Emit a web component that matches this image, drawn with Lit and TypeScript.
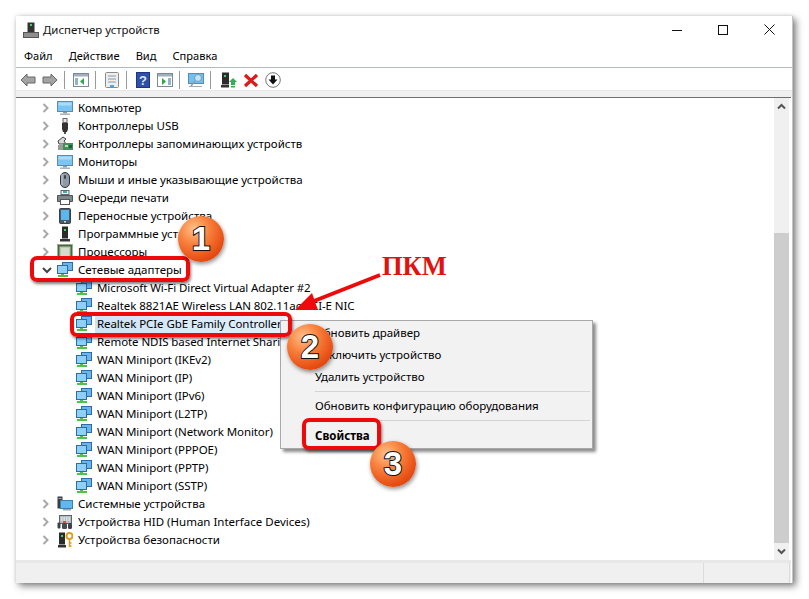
import { LitElement, html, css, svg } from "lit";
import { customElement } from "lit/decorators.js";

const ICONS: Record<string, unknown> = {
  monitor: svg`<rect x="0.5" y="1.5" width="15" height="10" fill="#7cc4f2" stroke="#5a8cb0"/><rect x="1.5" y="2.5" width="13" height="3" fill="#a9dcf8"/><rect x="6" y="12" width="4" height="1.5" fill="#8a9aa6"/><rect x="3" y="13.5" width="10" height="1.5" fill="#a8b4bc"/>`,
  usb: svg`<rect x="6" y="0.5" width="4" height="4" fill="#e8e8e8" stroke="#666"/><path d="M5 5h6v6l-1 3H6l-1-3z" fill="#333"/><rect x="7" y="14" width="2" height="2" fill="#555"/>`,
  storage: svg`<path d="M1 5l5-4 3 2-2 2 2 3H2z" fill="#d8d8d8" stroke="#444"/><rect x="1" y="9" width="8" height="5" fill="#9a9a9a"/><rect x="6" y="7" width="10" height="7" fill="#3f8f5f"/><rect x="8" y="9" width="3" height="2" fill="#c8d8a0"/><rect x="12" y="9" width="3" height="3" fill="#1d5c3a"/>`,
  mouse: svg`<rect x="3.5" y="0.5" width="9" height="15" rx="4.5" fill="#8f9aa6" stroke="#2e3338"/><rect x="7" y="3" width="2" height="4" rx="1" fill="#3c444c"/><path d="M5 2v11" stroke="#c6ced6"/>`,
  printer: svg`<rect x="4" y="0.5" width="8" height="4" fill="#eef4f6" stroke="#5c6b70"/><rect x="6" y="1" width="4" height="2" fill="#3db1a0"/><path d="M0.5 5.5h15v6h-3v-2h-9v2h-3z" fill="#7d878c" stroke="#4c5458"/><rect x="3.5" y="9.5" width="9" height="5" fill="#fff" stroke="#555"/>`,
  portable: svg`<rect x="2.5" y="0.5" width="11" height="15" rx="1" fill="#4b5a66" stroke="#36424c"/><rect x="4" y="2" width="8" height="10" fill="#5db7ef"/><rect x="7" y="13" width="2" height="1.5" fill="#cfd8df"/>`,
  software: svg`<rect x="5" y="0.5" width="6" height="12" fill="#2b2b2b"/><rect x="7" y="3" width="2" height="2" fill="#45d060"/><rect x="3" y="13" width="10" height="2.5" fill="#333"/>`,
  cpu: svg`<rect x="1.5" y="1.5" width="13" height="13" fill="#bcc9ab" stroke="#3f6b3f" stroke-width="2"/><rect x="4" y="4" width="8" height="8" fill="#d8d8cc"/><path d="M1 0v16M4 0v16M7 0v16M10 0v16M13 0v16M0 1h16" stroke="#8a7a3a" stroke-width=".6" stroke-dasharray="1 14"/>`,
  net: svg`<rect x="5.5" y="0.5" width="10" height="8" fill="#6cb5ea" stroke="#2c6ca8"/><rect x="0.5" y="3.5" width="10" height="8" fill="#8ed0f6" stroke="#2c6ca8"/><path d="M4 12h3v1h4v2H1v-2h3z" fill="#52c04c"/>`,
  system: svg`<rect x="0.5" y="0.5" width="5" height="12" fill="#3c3c3c"/><rect x="1.5" y="2" width="3" height="1" fill="#9ac"/><rect x="3.5" y="4.5" width="12" height="8" fill="#60b8ee" stroke="#3a80b0"/><rect x="6" y="13" width="8" height="1.5" fill="#9aa8b0"/>`,
  hid: svg`<rect x="2.5" y="1.5" width="12" height="8" fill="#b4bcc4" stroke="#5c646c"/><path d="M4 4h9M4 6h9" stroke="#fff" stroke-dasharray="1.5 1"/><rect x="0.5" y="8.5" width="3" height="6" rx="1" fill="#3c4248"/><rect x="5" y="9" width="5" height="6" rx="1.5" fill="#444b52"/><rect x="11" y="9" width="4" height="6" rx="1.5" fill="#3c4248"/><rect x="6" y="7" width="3" height="2" fill="#e05030"/>`,
  security: svg`<rect x="2" y="0.5" width="6" height="12" fill="#2b2b2b"/><rect x="4" y="3" width="2" height="2" fill="#45d060"/><rect x="1" y="13" width="8" height="2.5" fill="#333"/><circle cx="12.5" cy="4" r="3" fill="none" stroke="#d9a020" stroke-width="2"/><path d="M12.5 7v8M12.5 11h2M12.5 14h2" stroke="#d9a020" stroke-width="1.6"/>`,
};

const TOP_A: [string, string][] = [
  ["monitor", "Компьютер"],
  ["usb", "Контроллеры USB"],
  ["storage", "Контроллеры запоминающих устройств"],
  ["monitor", "Мониторы"],
  ["mouse", "Мыши и иные указывающие устройства"],
  ["printer", "Очереди печати"],
  ["portable", "Переносные устройства"],
  ["software", "Программные устройства"],
  ["cpu", "Процессоры"],
];
const CHILDREN = [
  "Microsoft Wi-Fi Direct Virtual Adapter #2",
  "Realtek 8821AE Wireless LAN 802.11ac PCI-E NIC",
  "Realtek PCIe GbE Family Controller",
  "Remote NDIS based Internet Sharing Device",
  "WAN Miniport (IKEv2)",
  "WAN Miniport (IP)",
  "WAN Miniport (IPv6)",
  "WAN Miniport (L2TP)",
  "WAN Miniport (Network Monitor)",
  "WAN Miniport (PPPOE)",
  "WAN Miniport (PPTP)",
  "WAN Miniport (SSTP)",
];
const TOP_B: [string, string][] = [
  ["system", "Системные устройства"],
  ["hid", "Устройства HID (Human Interface Devices)"],
  ["security", "Устройства безопасности"],
];

const winPanel = (inner: unknown) => svg`<rect x="0.5" y="1.5" width="15" height="13" fill="#fff" stroke="#7a8a96"/><rect x="1" y="2" width="14" height="2.5" fill="#9fb0bc"/>${inner}`;

@customElement("app-root")
export class AppRoot extends LitElement {
  static styles = css`
    :host { display: block; width: 809px; height: 599px; background: #fff; overflow: hidden; position: relative;
      font-family: "Noto Sans", "Open Sans", sans-serif; font-size: 11.5px; color: #000; }
    .window { margin: 16px 0 0 16px; width: 777px; height: 567px; background: #fff; display: flex; flex-direction: column;
      box-shadow: 3px 3px 7px rgba(0,0,0,.5), 0 0 3px rgba(0,0,0,.12); box-sizing: border-box; border-right: 1px solid #c4c4c4; }
    .title { height: 32px; display: flex; align-items: center; padding: 0 0 5px 7px; flex: none; box-sizing: border-box; }
    .title .t { font-size: 11.4px; margin-left: 4px; flex: 1; color: #111; }
    .ctrl { width: 46px; height: 27px; display: flex; align-items: center; justify-content: center; }
    .menu { height: 20px; display: flex; align-items: center; flex: none; border-bottom: 1px solid #b4b8c4; padding: 0 0 4px 8px; gap: 16px; box-sizing: border-box; font-size: 11.1px; }
    .toolbar { height: 22px; display: flex; align-items: center; flex: none; padding: 2px 0 0 4px; gap: 6px; box-sizing: border-box; }
    .tb { width: 16px; height: 16px; display: block; flex: none; }
    .tb.m { margin-left: 2px; }
    .sep { width: 1px; height: 18px; background: #9a9a9a; margin-right: 2px; flex: none; }
    .band { height: 7px; background: #f0f0f0; border-top: 1px solid #e6e6e6; flex: none; box-sizing: border-box; }
    .content { flex: 1; display: flex; border-top: 1px solid #6e6e6e; margin-right: 1px; min-height: 0; }
    .tree { flex: 1; padding-top: 1px; overflow: hidden; }
    .row { height: 18px; display: flex; align-items: center; white-space: nowrap; }
    .row.child { padding-left: 60px; }
    .row.child .label { letter-spacing: -.08px; }
    .row.top { padding-left: 22px; }
    .chev { width: 19px; height: 18px; flex: none; display: block; }
    .ico { width: 16px; height: 16px; flex: none; display: block; margin-right: 5px; }
    .label { height: 18px; line-height: 17px; }
    .row.sel .label { background: linear-gradient(90deg, #cfe3f5, #e4f0fb); padding-right: 3px; margin-left: -2px; padding-left: 2px; }
    .scroll { width: 15px; background: #f0f0f0; margin-right: 2px; flex: none; display: flex; flex-direction: column; }
    .sb-btn { height: 17px; display: flex; align-items: center; justify-content: center; flex: none; }
    .sb-space { height: 118px; flex: none; }
    .sb-thumb { flex: 1; background: #cdcdcd; }
    .status { height: 23px; flex: none; background: #f0f0f0; border-top: 3px solid #e8e8e8; box-sizing: border-box; margin-right: 1px; display: flex; justify-content: flex-end; }
    .cell { width: 85px; border-left: 1px solid #dcdcdc; border-right: 1px solid #dcdcdc; margin-right: 1px; }
    .ctx { position: absolute; left: 280px; top: 320px; width: 313px; height: 129px; box-sizing: border-box; background: #f2f2f2; border: 1px solid #a8a8a8;
      box-shadow: 3px 3px 3px rgba(0,0,0,.45); padding: 1px 2px 0 34px; }
    .item { height: 22px; line-height: 21px; white-space: nowrap; }
    .item.b { font-weight: 700; line-height: 23px; }
    .hr { height: 1px; background: #d4d4d4; margin: 3px 0; }
    .box { position: absolute; border: 4px solid #ee0a0a; border-radius: 7px; box-sizing: border-box; box-shadow: 1px 2px 3px rgba(0,0,0,.5); }
    .b1 { left: 30px; top: 256px; width: 160px; height: 26px; }
    .b2 { left: 70px; top: 312px; width: 222px; height: 25px; }
    .b3 { left: 302px; top: 418px; width: 79px; height: 32px; }
    .badge { position: absolute; width: 46px; height: 46px; border-radius: 50%; display: flex; align-items: center; justify-content: center;
      background: radial-gradient(circle at 35% 28%, #ffc08a 0%, #f8803c 35%, #e84e14 70%, #c83406 100%); box-shadow: 1px 2px 4px rgba(0,0,0,.45);
      font-family: "Liberation Sans", sans-serif; font-weight: 700; font-size: 33px; color: #fff; -webkit-text-stroke: 2px #111; paint-order: stroke fill; }
    .n1 { left: 178px; top: 216px; }
    .n2 { left: 287px; top: 324px; }
    .n3 { left: 370px; top: 441px; }
    .pkm { position: absolute; left: 382px; top: 250px; color: #e01212; font-family: "Liberation Serif", serif; font-weight: 700; font-size: 26.5px; line-height: 32px; white-space: nowrap; }
    .arrow { position: absolute; left: 290px; top: 268px; width: 96px; height: 48px; overflow: visible; }
  `;

  chev(open: boolean) {
    return html`<svg class="chev" viewBox="0 0 19 18">${open
      ? svg`<path d="M5 7l4 4 4-4" fill="none" stroke="#444" stroke-width="2"/>`
      : svg`<path d="M5.5 5l4 4-4 4" fill="none" stroke="#a8a8a8" stroke-width="2"/>`}</svg>`;
  }
  ico(k: string) {
    return html`<svg class="ico" viewBox="0 0 16 16">${ICONS[k]}</svg>`;
  }
  top(k: string, t: string, open = false) {
    return html`<div class="row top">${this.chev(open)}${this.ico(k)}<span class="label">${t}</span></div>`;
  }
  toolbar() {
    return html`<div class="toolbar">
      <svg class="tb" viewBox="0 0 16 16"><path d="M1 8l6-6v3h8v6H7v3z" fill="#a4a4a4" stroke="#666"/></svg>
      <svg class="tb" viewBox="0 0 16 16"><path d="M15 8L9 2v3H1v6h8v3z" fill="#a4a4a4" stroke="#666"/></svg>
      <span class="sep"></span>
      <svg class="tb" viewBox="0 0 16 16">${winPanel(svg`<rect x="2" y="6" width="3" height="7" fill="#8fb4d0"/><path d="M11 6v7l-4-3.500z" fill="#2fa84a"/>`)}</svg>
      <span class="sep"></span>
      <svg class="tb" viewBox="0 0 16 16"><rect x="1.500" y="0.500" width="13" height="15" rx="1" fill="#eee" stroke="#8a8a8a"/><path d="M4 4h8M4 7h8M4 10h8" stroke="#8a98a4"/><rect x="6" y="13" width="4" height="2" fill="#4ca8e8"/></svg>
      <span class="sep"></span>
      <svg class="tb" viewBox="0 0 16 16"><rect x="1.500" y="0.500" width="13" height="15" fill="#2d50a8" stroke="#1e3580"/><text x="8" y="13" text-anchor="middle" font-size="13" font-weight="700" font-family="Liberation Sans" fill="#dce6ff">?</text></svg>
      <svg class="tb" viewBox="0 0 16 16">${winPanel(svg`<rect x="11" y="6" width="3" height="7" fill="#8fb4d0"/><path d="M5 6v7l4-3.500z" fill="#2fa84a"/>`)}</svg>
      <span class="sep"></span>
      <svg class="tb" viewBox="0 0 16 16"><rect x="0.500" y="1.500" width="15" height="10" fill="#6fc0f0" stroke="#5a8cb0"/><circle cx="10" cy="6" r="3.500" fill="#bfe4f8" stroke="#7a9ab0"/><path d="M7 9l-4 5" stroke="#8a9aa6" stroke-width="1.500"/><rect x="1" y="14" width="13" height="1" fill="#a0acb4"/></svg>
      <span class="sep"></span>
      <svg class="tb m" viewBox="0 0 16 16"><rect x="1" y="0.500" width="7" height="12" fill="#2b2b2b"/><rect x="3" y="3" width="2" height="2" fill="#45d060"/><rect x="0" y="13" width="8" height="2.500" fill="#333"/><path d="M12 6l4 4h-2v3h-4v-3H8z" fill="#2fb34a"/><path d="M10 14h4v1.500h-4z" fill="#2fb34a"/></svg>
      <svg class="tb" viewBox="0 0 16 16"><path d="M2 3l12 11M14 3L2 14" stroke="#e01818" stroke-width="3.200"/></svg>
      <svg class="tb" viewBox="0 0 16 16"><circle cx="8" cy="8" r="7.300" fill="#fff" stroke="#777"/><path d="M6 3.500h4v4h2.500L8 12.500 3.500 7.500H6z" fill="#111"/></svg>
    </div>`;
  }
  render() {
    return html`
      <div class="window">
        <div class="title">
          <svg width="16" height="16" viewBox="0 0 16 16"><rect x="4.500" y="0.500" width="7" height="10" fill="#333"/><rect x="7" y="2" width="2" height="2" fill="#45d060"/><rect x="0.500" y="10.500" width="15" height="5" fill="#8e8e8e" stroke="#555"/></svg>
          <span class="t">Диспетчер устройств</span>
          <span class="ctrl"><svg width="10" height="10" viewBox="0 0 10 10"><path d="M0 5.500h10" stroke="#111"/></svg></span>
          <span class="ctrl"><svg width="10" height="10" viewBox="0 0 10 10"><rect x="0.500" y="0.500" width="9" height="9" fill="none" stroke="#111"/></svg></span>
          <span class="ctrl"><svg width="11" height="11" viewBox="0 0 11 11"><path d="M.5.500l10 10M10.500.500l-10 10" stroke="#111"/></svg></span>
        </div>
        <div class="menu"><span>Файл</span><span>Действие</span><span>Вид</span><span>Справка</span></div>
        ${this.toolbar()}
        <div class="band"></div>
        <div class="content">
          <div class="tree">
            ${TOP_A.map(([k, t]) => this.top(k, t))}
            ${this.top("net", "Сетевые адаптеры", true)}
            ${CHILDREN.map((t, i) => html`<div class="row child ${i === 2 ? "sel" : ""}">${this.ico("net")}<span class="label">${t}</span></div>`)}
            ${TOP_B.map(([k, t]) => this.top(k, t))}
          </div>
          <div class="scroll">
            <div class="sb-btn"><svg width="9" height="7" viewBox="0 0 9 7"><path d="M1 5.500l3.500-3.500 3.500 3.500" fill="none" stroke="#555" stroke-width="2"/></svg></div>
            <div class="sb-space"></div>
            <div class="sb-thumb"></div>
            <div class="sb-btn"><svg width="9" height="7" viewBox="0 0 9 7"><path d="M1 1.500l3.500 3.500 3.500-3.500" fill="none" stroke="#555" stroke-width="2"/></svg></div>
          </div>
        </div>
        <div class="status"><div class="cell"></div></div>
      </div>
      <div class="ctx">
        <div class="item">Обновить драйвер</div>
        <div class="item">Отключить устройство</div>
        <div class="item">Удалить устройство</div>
        <div class="hr"></div>
        <div class="item">Обновить конфигурацию оборудования</div>
        <div class="hr"></div>
        <div class="item b">Свойства</div>
      </div>
      <div class="box b1"></div>
      <div class="box b2"></div>
      <div class="box b3"></div>
      <svg class="arrow" viewBox="0 0 96 48"><path d="M90 7L24 33" stroke="#ee0a0a" stroke-width="4" fill="none"/><path d="M5 42L22 25l6 17z" fill="#ee0a0a"/></svg>
      <div class="pkm">ПКМ</div>
      <div class="badge n1">1</div>
      <div class="badge n2">2</div>
      <div class="badge n3">3</div>
    `;
  }
}
